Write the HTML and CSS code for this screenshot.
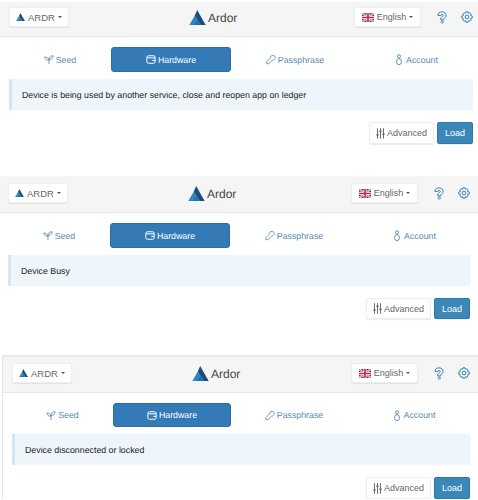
FILE: index.html
```html
<!DOCTYPE html>
<html lang="en">
<head>
    <meta charset="UTF-8">
    <meta name="viewport" content="width=device-width, initial-scale=1.0">
    <title>Ardor Wallet</title>
    <link rel="stylesheet" href="styles.css">
</head>
<body>
    <svg class="sprites" width="0" height="0">
        <symbol id="i-logo" viewBox="0 0 24 22">
            <polygon points="8,8 11.500,13 8,22 0,22" fill="#2f85bd"/>
            <polygon points="11.500,0 24,22 16.500,22 8,8" fill="#1a4d7c"/>
            <polygon points="11.500,13 16.500,22 7,22" fill="#2270a8"/>
        </symbol>
        <symbol id="i-flag" viewBox="0 0 12 9">
            <rect width="12" height="9" fill="#2b3a72"/>
            <path d="M0 0L12 9M12 0L0 9" stroke="#fff" stroke-width="2"/>
            <path d="M0 0L12 9M12 0L0 9" stroke="#c8243c" stroke-width=".7"/>
            <path d="M6 0V9M0 4.500H12" stroke="#fff" stroke-width="3"/>
            <path d="M6 0V9M0 4.500H12" stroke="#c8243c" stroke-width="1.600"/>
        </symbol>
        <symbol id="i-seed" viewBox="0 0 12 12">
            <path d="M6 11.500V6M6 7C6 4.500 4 3 1 3C1 5.500 3 7 6 7ZM6 6C6 3.500 8 1.500 11 1.500C11 4 9 6 6 6Z" fill="none" stroke="currentColor"/>
        </symbol>
        <symbol id="i-wallet" viewBox="0 0 12 12">
            <rect x="1" y="1.500" width="10" height="9" rx="2" fill="none" stroke="currentColor" stroke-width="1.200"/>
            <path d="M1.500 4H11M7.500 7H11" fill="none" stroke="currentColor" stroke-width="1.200"/>
        </symbol>
        <symbol id="i-key" viewBox="0 0 12 12">
            <path d="M1 11V8.500L5 4.500C5 2.500 6.500 1 8.500 1C10 1 11 2 11 3.500C11 5.500 9.500 7 7.500 7L3.500 11Z" fill="none" stroke="currentColor"/>
        </symbol>
        <symbol id="i-user" viewBox="0 0 12 14">
            <circle cx="6" cy="3" r="2" fill="none" stroke="currentColor" stroke-width="1.200"/>
            <rect x="3" y="6" width="6" height="7.500" rx="3" fill="none" stroke="currentColor" stroke-width="1.200"/>
        </symbol>
        <symbol id="i-help" viewBox="0 0 12 16">
            <path d="M1 5.500C1 2.800 3.200 1 6 1C8.800 1 11 2.800 11 5.500C11 7.500 9.500 8.500 8.200 9.500V11H4.500V8.500C5.500 7.500 7.500 7 7.500 5.500C7.500 4.800 6.800 4.300 6 4.300C5.200 4.300 4.500 4.800 4.500 5.500Z" fill="none" stroke="currentColor" stroke-width="1.200"/>
            <circle cx="6.300" cy="13.700" r="1.400" fill="none" stroke="currentColor"/>
        </symbol>
        <symbol id="i-gear" viewBox="0 0 16 16">
            <circle cx="8" cy="8" r="2.500" fill="none" stroke="currentColor" stroke-width="1.300"/>
            <path d="M6.700 1H9.300L9.800 3L11.600 2.300L13.500 4.200L12.700 6L15 6.700V9.300L12.800 10L13.600 11.800L11.800 13.700L10 12.800L9.300 15H6.700L6 12.900L4.200 13.700L2.300 11.800L3.200 10L1 9.300V6.700L3.200 6L2.400 4.200L4.200 2.300L6 3.100Z" fill="none" stroke="currentColor" stroke-width="1.300" stroke-linejoin="round"/>
        </symbol>
        <symbol id="i-sliders" viewBox="0 0 12 14">
            <path d="M2 0V14M6 0V14M10 0V14" stroke="currentColor" stroke-width="1.300"/>
            <path d="M.5 9H3.500M4.500 4H7.500M8.500 8H11.500" stroke="currentColor" stroke-width="2"/>
        </symbol>
    </svg>

    <section class="panel panel-first">
        <header class="topbar">
            <button class="btn coin-btn"><svg class="coin-logo"><use href="#i-logo"/></svg>ARDR<span class="caret"></span></button>
            <div class="brand"><svg class="brand-logo"><use href="#i-logo"/></svg>Ardor</div>
            <div class="topbar-right">
                <button class="btn lang-btn"><svg class="flag"><use href="#i-flag"/></svg>English<span class="caret"></span></button>
                <svg class="help-icon"><use href="#i-help"/></svg>
                <svg class="gear-icon"><use href="#i-gear"/></svg>
            </div>
        </header>
        <div class="body">
            <nav class="tabs">
                <a class="tab"><svg class="tab-icon"><use href="#i-seed"/></svg>Seed</a>
                <a class="tab active"><svg class="tab-icon"><use href="#i-wallet"/></svg>Hardware</a>
                <a class="tab"><svg class="tab-icon"><use href="#i-key"/></svg>Passphrase</a>
                <a class="tab"><svg class="tab-icon"><use href="#i-user"/></svg>Account</a>
            </nav>
            <div class="alert">Device is being used by another service, close and reopen app on ledger</div>
            <div class="actions">
                <button class="btn adv-btn"><svg class="sliders"><use href="#i-sliders"/></svg>Advanced</button>
                <button class="btn load-btn">Load</button>
            </div>
        </div>
    </section>

    <section class="panel panel-second">
        <header class="topbar">
            <button class="btn coin-btn"><svg class="coin-logo"><use href="#i-logo"/></svg>ARDR<span class="caret"></span></button>
            <div class="brand"><svg class="brand-logo"><use href="#i-logo"/></svg>Ardor</div>
            <div class="topbar-right">
                <button class="btn lang-btn"><svg class="flag"><use href="#i-flag"/></svg>English<span class="caret"></span></button>
                <svg class="help-icon"><use href="#i-help"/></svg>
                <svg class="gear-icon"><use href="#i-gear"/></svg>
            </div>
        </header>
        <div class="body">
            <nav class="tabs">
                <a class="tab"><svg class="tab-icon"><use href="#i-seed"/></svg>Seed</a>
                <a class="tab active"><svg class="tab-icon"><use href="#i-wallet"/></svg>Hardware</a>
                <a class="tab"><svg class="tab-icon"><use href="#i-key"/></svg>Passphrase</a>
                <a class="tab"><svg class="tab-icon"><use href="#i-user"/></svg>Account</a>
            </nav>
            <div class="alert">Device Busy</div>
            <div class="actions">
                <button class="btn adv-btn"><svg class="sliders"><use href="#i-sliders"/></svg>Advanced</button>
                <button class="btn load-btn">Load</button>
            </div>
        </div>
    </section>

    <section class="panel panel-third">
        <header class="topbar">
            <button class="btn coin-btn"><svg class="coin-logo"><use href="#i-logo"/></svg>ARDR<span class="caret"></span></button>
            <div class="brand"><svg class="brand-logo"><use href="#i-logo"/></svg>Ardor</div>
            <div class="topbar-right">
                <button class="btn lang-btn"><svg class="flag"><use href="#i-flag"/></svg>English<span class="caret"></span></button>
                <svg class="help-icon"><use href="#i-help"/></svg>
                <svg class="gear-icon"><use href="#i-gear"/></svg>
            </div>
        </header>
        <div class="body">
            <nav class="tabs">
                <a class="tab"><svg class="tab-icon"><use href="#i-seed"/></svg>Seed</a>
                <a class="tab active"><svg class="tab-icon"><use href="#i-wallet"/></svg>Hardware</a>
                <a class="tab"><svg class="tab-icon"><use href="#i-key"/></svg>Passphrase</a>
                <a class="tab"><svg class="tab-icon"><use href="#i-user"/></svg>Account</a>
            </nav>
            <div class="alert">Device disconnected or locked</div>
            <div class="actions">
                <button class="btn adv-btn"><svg class="sliders"><use href="#i-sliders"/></svg>Advanced</button>
                <button class="btn load-btn">Load</button>
            </div>
        </div>
    </section>
</body>
</html>
```

FILE: styles.css
```css
body {
    margin: 0;
    font-family: "Liberation Sans", Arial, sans-serif;
    font-size: 8.8px;
    color: #333;
    background: #fff;
    text-rendering: geometricPrecision;
}
.sprites {
    display: block;
    height: 0;
}
.panel-first {
    margin-top: 2px;
    --left: 9px;
    --right: 5px;
    --adv-height: 22px;
}
.panel-second {
    margin-top: 32px;
    --left: 8px;
    --right: 8px;
    --adv-height: 21px;
}
.panel-third {
    margin-top: 36px;
    margin-left: 2px;
    border-left: 1px solid #e7e7e7;
    --left: 9px;
    --right: 8px;
    --adv-height: 22px;
}
.topbar {
    display: flex;
    align-items: flex-start;
    height: 29px;
    padding: 5px var(--right) 0 var(--left);
    background: #f5f5f5;
    border-bottom: 1px solid #e7e7e7;
}
.panel-second .topbar {
    padding-top: 7px;
}
.panel-third .topbar {
    padding-top: 6px;
    border-top: 2px solid #e7e7e7;
}
.btn {
    display: flex;
    align-items: center;
    justify-content: center;
    box-sizing: border-box;
    height: 20px;
    padding: 0;
    font-family: inherit;
    font-size: 9px;
    color: #666;
    background: #fff;
    border: 1px solid #eee;
    border-radius: 2px;
    box-shadow: 0 1px 1px rgba(0, 0, 0, 0.08);
}
.coin-btn {
    width: 60px;
    font-size: 9.500px;
}
.coin-logo {
    width: 9px;
    height: 8px;
    margin-right: 3px;
}
.caret {
    width: 0;
    height: 0;
    margin-left: 3px;
    border-top: 2.500px solid #555;
    border-left: 2.500px solid transparent;
    border-right: 2.500px solid transparent;
}
.brand {
    display: flex;
    align-items: center;
    margin-left: 120px;
    font-size: 12px;
    color: #444;
    height: 22px;
}
.brand-logo {
    width: 17px;
    height: 15px;
    margin-right: 2px;
    margin-top: -2px;
}
.topbar-right {
    display: flex;
    align-items: center;
    margin-left: auto;
    height: 20px;
}
.lang-btn {
    width: 67px;
}
.flag {
    width: 12px;
    height: 9px;
    margin-right: 3px;
}
.help-icon {
    width: 10px;
    height: 13px;
    margin-left: 16px;
    color: #2f7fb5;
}
.gear-icon {
    width: 12px;
    height: 12px;
    margin-left: 14px;
    color: #2f7fb5;
}
.body {
    padding: 10px var(--right) 0 var(--left);
}
.tabs {
    display: grid;
    grid-template-columns: 102px 120px 128px 1fr;
    height: 25px;
}
.panel-third .tabs {
    grid-template-columns: 101px 118px 126px 1fr;
    height: 24px;
}
.tab {
    display: flex;
    align-items: center;
    justify-content: center;
    color: #5a8bb0;
}
.tab.active {
    color: #fff;
    background: #337ab7;
    border: 1px solid #2e6da4;
    border-radius: 3px;
    box-sizing: border-box;
}
.tab-icon {
    width: 10px;
    height: 11px;
    margin-right: 2px;
}
.alert {
    display: flex;
    align-items: center;
    box-sizing: border-box;
    height: 31px;
    margin-top: 7px;
    padding-left: 10px;
    color: #222;
    background: #eff6fb;
    border-left: 3px solid #d5e5f1;
}
.actions {
    display: flex;
    justify-content: flex-end;
    gap: 3px;
    margin-top: 12px;
}
.adv-btn {
    width: 65px;
    height: var(--adv-height);
}
.sliders {
    width: 9px;
    height: 11px;
    margin-right: 2px;
}
.load-btn {
    width: 36px;
    height: var(--adv-height);
    color: #fff;
    background: #3a87b8;
    border-color: #2f78a8;
}
```
